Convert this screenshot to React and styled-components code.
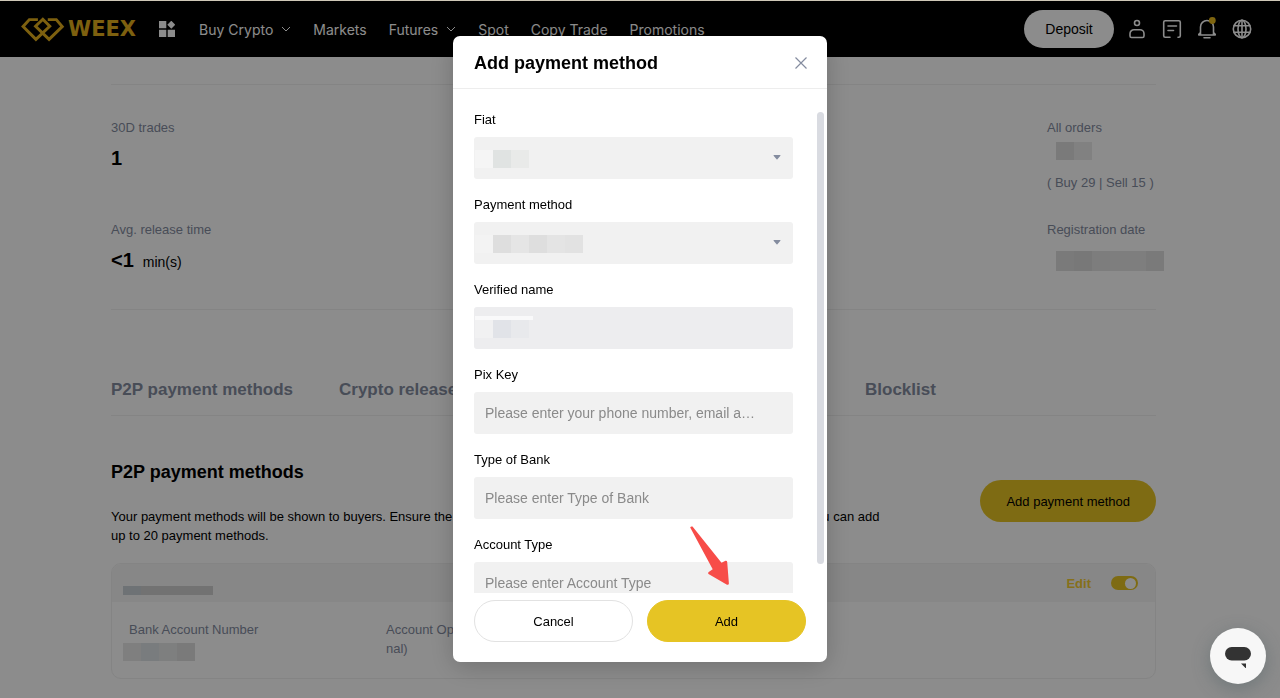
import styled, { createGlobalStyle } from "styled-components";
import { useState } from "react";

const GlobalStyle = createGlobalStyle`
  * {
    box-sizing: border-box;
  }
  body {
    margin: 0;
    background-color: #ffffff;
    color: #000000;
    font-family: "Liberation Sans", Arial, sans-serif;
    font-size: 13px;
    overflow: hidden;
  }
  h1, h2, p {
    margin: 0;
  }
  button, input, select {
    font-family: inherit;
  }
`;

const selects = [
  {
    id: "fiat",
    label: "Fiat",
    cells: ["#f5f5f5", "#e0e3e2", "#e9eae9"],
  },
  {
    id: "method",
    label: "Payment method",
    cells: ["#f3f3f3", "#dedede", "#e5e5e5", "#dedede", "#e4e4e4", "#e2e2e2"],
  },
];

const inputs = [
  {
    id: "pix",
    label: "Pix Key",
    placeholder: "Please enter your phone number, email a…",
  },
  {
    id: "bank",
    label: "Type of Bank",
    placeholder: "Please enter Type of Bank",
  },
  {
    id: "account",
    label: "Account Type",
    placeholder: "Please enter Account Type",
  },
];

function Masked({ cells, height = 18 }) {
  return (
    <Mask $height={height}>
      {cells.map((color, i) => (
        <MaskCell key={i} $color={color} />
      ))}
    </Mask>
  );
}

function Chevron() {
  return (
    <svg width="10" height="6" viewBox="0 0 10 6" fill="none" stroke="#fff">
      <path d="M1 1l4 4 4-4" />
    </svg>
  );
}

function Header() {
  return (
    <Bar>
      <Logo href="#">
        <svg width="45" height="25" viewBox="60 50 136 76" fill="none">
          <path
            d="M114 58H88L69 79L108 118L150 78L129 57L107 78L148 118L188 79L170 58H144"
            stroke="#e4b01c"
            strokeWidth="9"
          />
        </svg>
        WEEX
      </Logo>
      <IconButton aria-label="Products" $size={16}>
        <svg width="16" height="16" viewBox="0 0 16 16" fill="#fff">
          <path d="M0 0h7.300v7.300H0zM0 8.700h7.300V16H0zM8.700 8.700H16V16H8.700zM12.300-.3l4 4-4 4-4-4z" />
        </svg>
      </IconButton>
      <Nav>
        <NavLink href="#">
          Buy Crypto <Chevron />
        </NavLink>
        <NavLink href="#">Markets</NavLink>
        <NavLink href="#">
          Futures <Chevron />
        </NavLink>
        <NavLink href="#">Spot</NavLink>
        <NavLink href="#">Copy Trade</NavLink>
        <NavLink href="#">Promotions</NavLink>
      </Nav>
      <Actions>
        <Deposit>Deposit</Deposit>
        <IconButton aria-label="Account">
          <HeaderIcon viewBox="0 0 24 24">
            <circle cx="12" cy="6" r="2.500" />
            <path d="M9 12.700h6a4 4 0 0 1 4 4v2.300a1.500 1.500 0 0 1-1.500 1.500h-11a1.500 1.500 0 0 1-1.500-1.500v-2.300a4 4 0 0 1 4-4z" />
          </HeaderIcon>
        </IconButton>
        <IconButton aria-label="Orders">
          <HeaderIcon viewBox="0 0 24 24">
            <path d="M10 20.300H5.200a1.500 1.500 0 0 1-1.500-1.500V5.200a1.500 1.500 0 0 1 1.500-1.500h13.600a1.500 1.500 0 0 1 1.500 1.500v13.600a1.500 1.500 0 0 1-1.500 1.500h-.8M8 9h8.500M8 13.500h5.500" />
          </HeaderIcon>
        </IconButton>
        <IconButton aria-label="Notifications">
          <HeaderIcon viewBox="0 0 24 24">
            <path d="M5.500 17.500V10a6.500 6.500 0 0 1 13 0v7.500M5.500 15.500L3.800 17.200v.8h16.400v-.8l-1.700-1.700M9 20.800h6" />
            <circle cx="17.300" cy="3.500" r="3.400" fill="#e6b81c" stroke="none" />
          </HeaderIcon>
        </IconButton>
        <IconButton aria-label="Language">
          <HeaderIcon viewBox="0 0 24 24">
            <circle cx="12" cy="12" r="8.700" />
            <ellipse cx="12" cy="12" rx="4" ry="8.700" />
            <path d="M4.200 8.700h15.600M4.200 15.300h15.600M12 3.300v17.400" />
          </HeaderIcon>
        </IconButton>
      </Actions>
    </Bar>
  );
}

function Profile() {
  const [enabled, setEnabled] = useState(true);

  return (
    <Content>
      <Stats>
        <Stat>
          <Muted>30D trades</Muted>
          <Value>1</Value>
        </Stat>
        <Stat>
          <Muted>All orders</Muted>
          <Value>
            <OrdersMask>
              <Masked cells={["#dedede", "#ebebeb"]} />
            </OrdersMask>
          </Value>
          <Split>( Buy 29 | Sell 15 )</Split>
        </Stat>
        <Stat>
          <Muted>Avg. release time</Muted>
          <Value>
            &lt;1 <Unit>min(s)</Unit>
          </Value>
        </Stat>
        <Stat>
          <Muted>Registration date</Muted>
          <Value>
            <DateMask>
              <Masked
                cells={["#dedede", "#dadada", "#e3e3e3", "#e5e5e5", "#e6e6e6", "#dedede"]}
                height={20}
              />
            </DateMask>
          </Value>
        </Stat>
      </Stats>

      <Tabs>
        <Tab href="#">P2P payment methods</Tab>
        <Tab href="#">Crypto release</Tab>
        <Tab href="#">Blocklist</Tab>
      </Tabs>

      <Intro>
        <div>
          <SectionTitle>P2P payment methods</SectionTitle>
          <Description>
            Your payment methods will be shown to buyers. Ensure the name on
            the account matches your verified name on WEEX. You can add up to
            20 payment methods.
          </Description>
        </div>
        <AddMethod>Add payment method</AddMethod>
      </Intro>

      <Card>
        <CardHead>
          <NameMask>
            <Masked
              cells={["#c9d0d5", "#d0d0d0", "#cfcfcf", "#d0d0d0", "#cfcfcf"]}
              height={9}
            />
          </NameMask>
          <Edit href="#">Edit</Edit>
          <Switch
            type="checkbox"
            aria-label="Enable payment method"
            checked={enabled}
            onChange={() => setEnabled(!enabled)}
          />
        </CardHead>
        <CardBody>
          <Detail>
            Bank Account Number
            <NumberMask>
              <Masked cells={["#e8e8e8", "#dde2e6", "#e5e8e8", "#dedede"]} />
            </NumberMask>
          </Detail>
          <Detail>
            Account Ope
            <br />
            nal)
          </Detail>
        </CardBody>
      </Card>
    </Content>
  );
}

function PaymentModal() {
  return (
    <Overlay>
      <Modal role="dialog" aria-labelledby="modal-title">
        <ModalHead>
          <ModalTitle id="modal-title">Add payment method</ModalTitle>
          <Close aria-label="Close">
            <svg width="12" height="12" viewBox="0 0 12 12" stroke="#848c9f">
              <path d="M.5.5l11 11M11.500.5l-11 11" strokeWidth="1.200" />
            </svg>
          </Close>
        </ModalHead>
        <ModalBody>
          <Fields>
            {selects.map((field) => (
              <Field key={field.id}>
                <Label htmlFor={field.id}>{field.label}</Label>
                <Control>
                  <Select id={field.id} />
                  <Caret viewBox="0 0 8 5">
                    <path d="M1 0h6a.5.5 0 0 1 .4.8L4.400 4.300a.5.5 0 0 1-.8 0L.6.8A.5.5 0 0 1 1 0z" />
                  </Caret>
                  <FieldMask>
                    <Masked cells={field.cells} />
                  </FieldMask>
                </Control>
              </Field>
            ))}
            <Field>
              <Label htmlFor="name">Verified name</Label>
              <Control>
                <Input id="name" disabled />
                <FieldMask>
                  <MaskLine />
                  <Masked cells={["#f1f1f2", "#e1e3e8", "#e8e9ec"]} />
                </FieldMask>
              </Control>
            </Field>
            {inputs.map((field) => (
              <Field key={field.id}>
                <Label htmlFor={field.id}>{field.label}</Label>
                <Input id={field.id} placeholder={field.placeholder} />
              </Field>
            ))}
          </Fields>
          <ScrollThumb />
        </ModalBody>
        <ModalFooter>
          <ModalButton>Cancel</ModalButton>
          <ModalButton $primary>Add</ModalButton>
        </ModalFooter>
        <Arrow viewBox="0 0 40 60">
          <path d="M.2 1.500Q.8 0 2.500.6L31.500 36.700L35.500 34.800Q37 34.500 37.200 36L38.900 57.500Q38.800 59.200 37 58.700L18.500 48Q17.500 47 18.700 46L22.700 43.300z" />
        </Arrow>
      </Modal>
    </Overlay>
  );
}

export default function App() {
  return (
    <>
      <GlobalStyle />
      <Page>
        <Header />
        <Profile />
      </Page>
      <PaymentModal />
      <Chat aria-label="Open chat">
        <svg width="28" height="24" viewBox="0 0 28 24" fill="#333">
          <rect x="1" y="3" width="26" height="13.500" rx="6.700" />
          <path d="M17 19.500h5v5z" />
        </svg>
      </Chat>
    </>
  );
}

const Page = styled.div`
  min-height: 100vh;
  border-top: 1px solid #cfc8b8;
`;

const Bar = styled.header`
  display: flex;
  align-items: center;
  height: 56px;
  padding: 0 26px 0 20px;
  background-color: #000000;
`;

const Logo = styled.a`
  display: flex;
  align-items: center;
  gap: 3px;
  margin-right: 23px;
  font-family: "DejaVu Sans", sans-serif;
  font-size: 21px;
  font-weight: 700;
  line-height: 24px;
  color: #e4b01c;
  text-decoration: none;
`;

const IconButton = styled.button`
  display: flex;
  align-items: center;
  justify-content: center;
  width: ${({ $size = 24 }) => $size}px;
  height: 24px;
  padding: 0;
  border: none;
  background: none;
`;

const HeaderIcon = styled.svg`
  width: 24px;
  height: 24px;
  fill: none;
  stroke: #ffffff;
  stroke-width: 1.6;
  stroke-linecap: round;
  stroke-linejoin: round;
`;

const Nav = styled.nav`
  display: flex;
  align-items: center;
  gap: 22px;
  margin-left: 24px;
`;

const NavLink = styled.a`
  display: flex;
  align-items: center;
  gap: 8px;
  font-family: Inter, sans-serif;
  font-size: 14px;
  color: #ffffff;
  white-space: nowrap;
  text-decoration: none;
`;

const Actions = styled.div`
  display: flex;
  align-items: center;
  gap: 11px;
  margin-left: auto;
`;

const Deposit = styled.button`
  width: 90px;
  height: 38px;
  padding: 0;
  border: none;
  border-radius: 19px;
  background-color: #ffffff;
  font-size: 14px;
  color: #000000;
`;

const Content = styled.main`
  width: calc(100% - 235px);
  margin: 0 124px 0 111px;
  padding-top: 27px;
`;

const Stats = styled.section`
  display: grid;
  grid-template-columns: 1fr 109px;
  row-gap: 31px;
  padding: 35px 0 37px;
  border-top: 1px solid #f0f0f0;
  border-bottom: 1px solid #f0f0f0;
`;

const Stat = styled.div`
  display: flex;
  flex-direction: column;
`;

const Muted = styled.span`
  line-height: 16px;
  color: #848c9f;
`;

const Value = styled.div`
  position: relative;
  display: flex;
  align-items: baseline;
  gap: 9px;
  height: 24px;
  margin-top: 10px;
  font-size: 20px;
  font-weight: 700;
  line-height: 24px;
`;

const Unit = styled.span`
  font-size: 14px;
  font-weight: 400;
`;

const Split = styled.span`
  margin-top: 5px;
  line-height: 16px;
  font-weight: 500;
  color: #848c9f;
`;

const Mask = styled.div`
  display: flex;
  height: ${({ $height }) => $height}px;
`;

const MaskCell = styled.span`
  width: 18px;
  background-color: ${({ $color }) => $color};
`;

const MaskLine = styled.div`
  width: 58px;
  height: 4px;
  background-color: #f9f9fa;
`;

const OrdersMask = styled.div`
  position: absolute;
  top: -4px;
  left: 9px;
`;

const DateMask = styled.div`
  position: absolute;
  top: 3px;
  left: 9px;
`;

const Tabs = styled.nav`
  display: grid;
  grid-template-columns: 228px 526px auto;
  margin-top: 68px;
  padding-bottom: 13px;
  border-bottom: 1px solid #f0f0f0;
`;

const Tab = styled.a`
  font-size: 17px;
  font-weight: 700;
  line-height: 24px;
  color: #848c9f;
  text-decoration: none;
`;

const Intro = styled.section`
  display: flex;
  align-items: flex-start;
  justify-content: space-between;
  margin-top: 44px;
`;

const SectionTitle = styled.h2`
  font-size: 18px;
  font-weight: 700;
  line-height: 24px;
`;

const Description = styled.p`
  max-width: 784px;
  margin-top: 23px;
  line-height: 19px;
`;

const AddMethod = styled.button`
  flex-shrink: 0;
  height: 42px;
  margin-top: 20px;
  padding: 0 26px;
  border: none;
  border-radius: 21px;
  background-color: #e6c424;
  font-size: 13px;
  color: #000000;
`;

const Card = styled.section`
  margin-top: 18px;
  border: 1px solid #f0f0f0;
  border-radius: 10px;
  overflow: hidden;
`;

const CardHead = styled.div`
  display: flex;
  align-items: center;
  height: 38px;
  padding: 0 17px 0 11px;
  background-color: #f6f6f6;
`;

const NameMask = styled.div`
  margin-top: 14px;
`;

const Edit = styled.a`
  margin-left: auto;
  font-weight: 700;
  color: #f4cc30;
  text-decoration: none;
`;

const Switch = styled.input`
  appearance: none;
  display: flex;
  align-items: center;
  width: 27px;
  height: 14px;
  margin: 0 0 0 20px;
  padding: 0 2px;
  border-radius: 7px;
  background-color: #cccccc;

  &::after {
    content: "";
    width: 11px;
    height: 11px;
    border-radius: 50%;
    background-color: #ffffff;
  }

  &:checked {
    justify-content: flex-end;
    background-color: #e6c424;
  }
`;

const CardBody = styled.div`
  display: grid;
  grid-template-columns: 257px 1fr;
  padding: 18px 17px 20px;
`;

const Detail = styled.div`
  position: relative;
  line-height: 19px;
  color: #848c9f;
`;

const NumberMask = styled.div`
  position: absolute;
  top: 23px;
  left: -6px;
`;

const Overlay = styled.div`
  position: fixed;
  inset: 1px 0 0;
  display: flex;
  align-items: center;
  justify-content: center;
  padding-bottom: 1px;
  background-color: rgba(0, 0, 0, 0.45);
`;

const Modal = styled.div`
  position: relative;
  width: 374px;
  border-radius: 7px;
  background-color: #ffffff;
  box-shadow: 0 5px 26px rgba(0, 0, 0, 0.2);
`;

const ModalHead = styled.div`
  display: flex;
  align-items: center;
  justify-content: space-between;
  height: 53px;
  padding: 2px 20px 0 21px;
  border-bottom: 1px solid #ededed;
`;

const ModalTitle = styled.h1`
  font-size: 18px;
  font-weight: 700;
`;

const Close = styled.button`
  display: flex;
  padding: 0;
  border: none;
  background: none;
`;

const ModalBody = styled.div`
  display: flex;
  justify-content: space-between;
  height: calc(100vh - 217px);
  margin: 23px 3px 0 21px;
  overflow: hidden;
`;

const Fields = styled.div`
  display: flex;
  flex-direction: column;
  gap: 18px;
  width: 319px;
`;

const Field = styled.div`
  display: flex;
  flex-direction: column;
  gap: 9px;
`;

const Label = styled.label`
  line-height: 16px;
`;

const Control = styled.div`
  position: relative;
  display: flex;
`;

const Input = styled.input`
  width: 100%;
  height: 42px;
  padding: 0 11px;
  border: none;
  border-radius: 3px;
  background-color: #f1f1f1;
  font-size: 14px;

  &::placeholder {
    color: #8a8a8a;
  }

  &:disabled {
    background-color: #ededef;
  }
`;

const Select = styled.select`
  appearance: none;
  width: 100%;
  height: 42px;
  border: none;
  border-radius: 3px;
  background-color: #f1f1f1;
`;

const Caret = styled.svg`
  position: absolute;
  top: 18px;
  right: 12px;
  width: 8px;
  height: 5px;
  fill: #848c9f;
`;

const FieldMask = styled.div`
  position: absolute;
  bottom: 11px;
  left: 1px;
`;

const ScrollThumb = styled.div`
  width: 7px;
  height: 94%;
  border-radius: 4px;
  background-color: #d9dbe1;
`;

const ModalFooter = styled.div`
  display: flex;
  gap: 14px;
  padding: 7px 21px 20px;
`;

const ModalButton = styled.button`
  flex: 1;
  height: 42px;
  border: 1px solid ${({ $primary }) => ($primary ? "#e6c424" : "#e2e2e2")};
  border-radius: 21px;
  background-color: ${({ $primary }) => ($primary ? "#e6c424" : "#ffffff")};
  font-size: 13px;
  color: #000000;
`;

const Arrow = styled.svg`
  position: absolute;
  right: 97px;
  bottom: 76px;
  width: 40px;
  height: 60px;
  fill: #f74c48;
`;

const Chat = styled.button`
  position: fixed;
  right: 14px;
  bottom: 14px;
  display: flex;
  align-items: center;
  justify-content: center;
  width: 56px;
  height: 56px;
  padding: 0;
  border: none;
  border-radius: 50%;
  background-color: #f7f7f7;
  box-shadow: 0 5px 18px rgba(70, 90, 95, 0.4);
`;
